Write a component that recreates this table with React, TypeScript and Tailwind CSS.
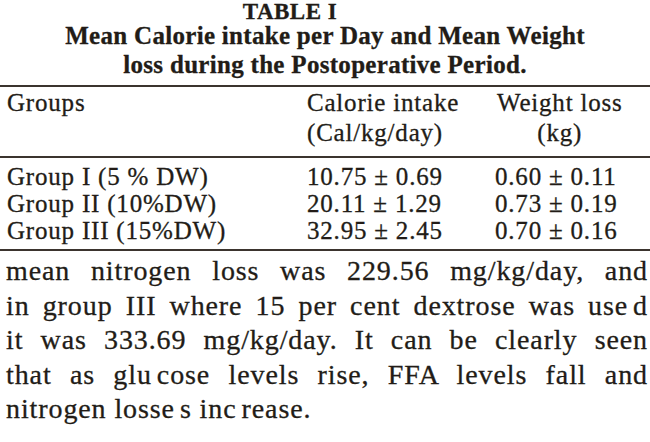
const serif = { fontFamily: '"Liberation Serif", "Times New Roman", serif' };

const rows = [
  { group: "Group I (5 % DW)", calories: "10.75 ± 0.69", weight: "0.60 ± 0.11" },
  { group: "Group II (10%DW)", calories: "20.11 ± 1.29", weight: "0.73 ± 0.19" },
  { group: "Group III (15%DW)", calories: "32.95 ± 2.45", weight: "0.70 ± 0.16" },
];

// the loose gaps inside a few words come from the original typesetting
function Gap() {
  return <span className="inline-block w-[5px]" />;
}

function Rule({ className = "" }: { className?: string }) {
  return <div className={`h-[2px] w-full bg-[#3b342e] ${className}`} />;
}

export default function App() {
  return (
    <div
      className="h-[442px] w-[650px] overflow-hidden bg-white text-[#221c17] [-webkit-text-stroke:0.3px_#221c17]"
      style={serif}
    >
      <div className="text-center font-bold">
        <div className="pr-[70px] pt-[1px] text-[23px] leading-[21px] tracking-[0.5px]">TABLE I</div>
        <div className="text-[25px] leading-[28px] tracking-[0.3px]">
          Mean Calorie intake per Day and Mean Weight
        </div>
        <div className="pt-[1px] text-[25px] leading-[28px] tracking-[0.3px]">
          loss during the Postoperative Period.
        </div>
      </div>

      <Rule className="mt-[6px]" />

      <div className="mt-[1px] grid grid-cols-[300px_188px_1fr] text-[25px] leading-[30px] tracking-[0.8px]">
        <div className="pl-[7px]">Groups</div>
        <div className="pl-[7px]">
          <div>Calorie intake</div>
          <div>(Cal/kg/day)</div>
        </div>
        <div className="pl-[9px]">
          <div className="w-fit text-center">
            <div>Weight loss</div>
            <div>(kg)</div>
          </div>
        </div>
      </div>

      <Rule className="mt-[8px]" />

      <div className="mt-[5px] grid grid-cols-[300px_188px_1fr] text-[25px] leading-[27px] tracking-[0.8px]">
        {rows.map((row) => (
          <div className="contents" key={row.group}>
            <div className="pl-[7px]">{row.group}</div>
            <div className="pl-[7px]">{row.calories}</div>
            <div className="pl-[7px]">{row.weight}</div>
          </div>
        ))}
      </div>

      <Rule className="mt-[5px]" />

      <div className="mt-[3px] pl-[6px] pr-[2px] text-[28px] leading-[34.5px] tracking-[0.9px]">
        <div className="text-justify [text-align-last:justify]">
          mean nitrogen loss was 229.56 mg/kg/day, and
        </div>
        <div className="text-justify [text-align-last:justify]">
          in group III where 15 per cent dextrose was use<Gap />d
        </div>
        <div className="text-justify [text-align-last:justify]">
          it was 333.69 mg/kg/day. It can be clearly seen
        </div>
        <div className="text-justify [text-align-last:justify]">
          that as glu<Gap />cose levels rise, FFA levels fall and
        </div>
        <div>
          nitrogen losse<Gap />s inc<Gap />rease.
        </div>
      </div>
    </div>
  );
}
